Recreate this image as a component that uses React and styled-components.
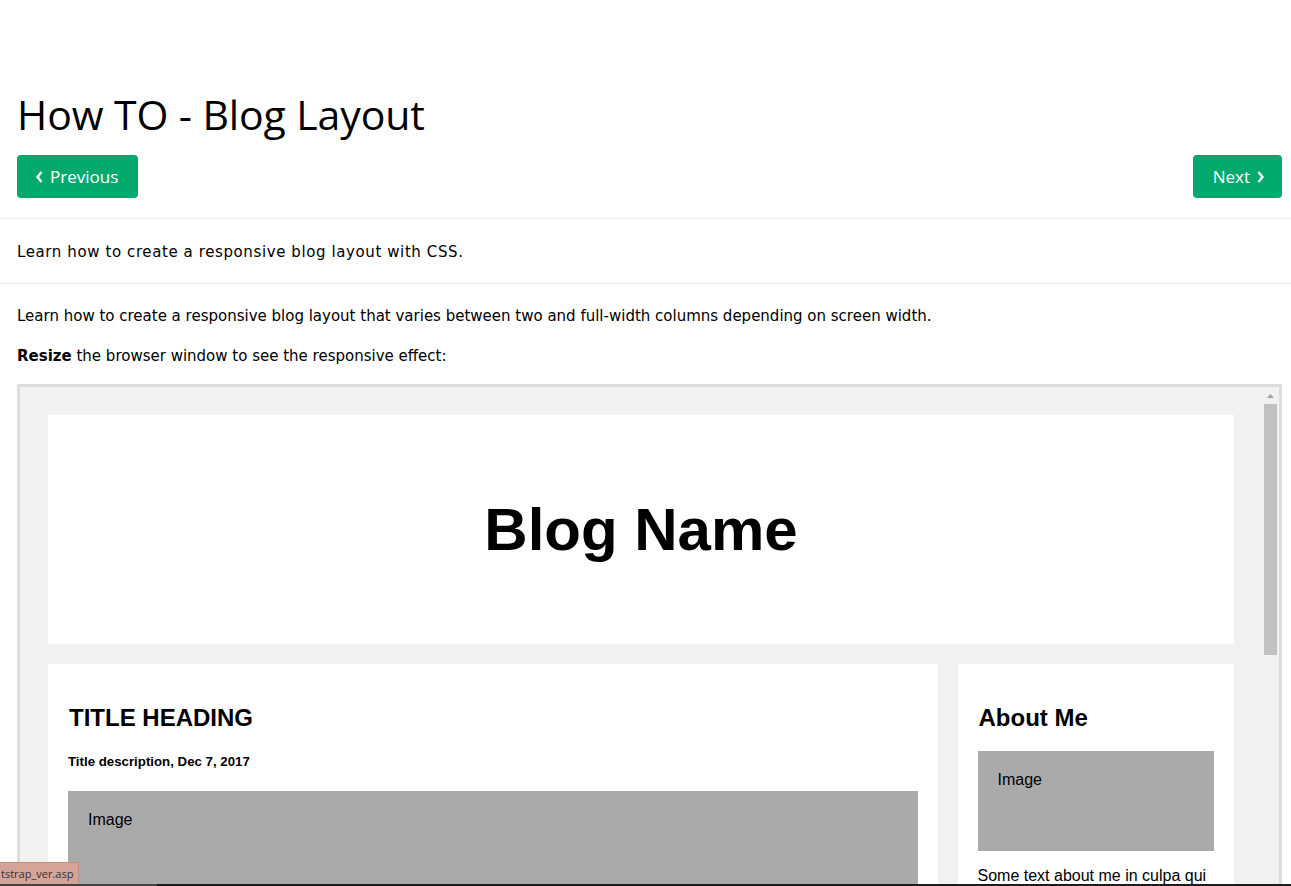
import React from "react";
import styled, { createGlobalStyle } from "styled-components";

const GlobalStyle = createGlobalStyle`
  html, body {
    margin: 0;
    padding: 0;
    background: #fff;
    overflow: hidden;
  }
`;

const Page = styled.div`
  position: relative;
  height: 886px;
  overflow: hidden;
  font-family: "DejaVu Sans", Verdana, sans-serif;
  color: #000;
`;

const Top = styled.div`
  padding: 90px 9px 0 17px;
`;

const Title = styled.h1`
  margin: 0;
  font-family: "Open Sans", "Noto Sans", sans-serif;
  font-size: 41px;
  font-weight: 400;
  line-height: 48px;
  letter-spacing: -0.1px;
`;

const NavRow = styled.div`
  display: flex;
  justify-content: space-between;
  margin-top: 17px;
  padding-bottom: 20px;
`;

const NavButton = styled.a`
  display: flex;
  align-items: center;
  gap: 7px;
  height: 43px;
  padding: 0 ${p => (p.$next ? "18px" : "20px")} 0 ${p => (p.$next ? "20px" : "19px")};
  box-sizing: border-box;
  background: #04aa6d;
  color: #fff;
  border-radius: 4px;
  font-family: "Open Sans", "Noto Sans", sans-serif;
  font-size: 17px;
  text-decoration: none;
`;

const Chevron = styled.svg`
  width: 7px;
  height: 12px;
  margin-top: 1px;
`;

const Rule = styled.hr`
  margin: 0;
  border: 0;
  border-top: 1px solid #eee;
`;

const Intro = styled.p`
  margin: 22px 17px 20px;
  font-size: 15px;
  line-height: 22px;
  letter-spacing: 0.6px;
`;

const Article = styled.div`
  padding: 21px 9px 0 17px;
`;

const Para = styled.p`
  margin: 0 0 18px;
  font-size: 15px;
  line-height: 22px;

  &:last-of-type {
    margin-bottom: 17px;
  }
`;

const Frame = styled.div`
  display: flex;
  height: 560px;
  border: 3px solid #dddddd;
  background: #f1f1f1;
  overflow: hidden;
`;

const FrameBody = styled.div`
  flex: 1;
  padding: 28px;
  font-family: "Liberation Sans", Arial, sans-serif;
  font-size: 16px;
`;

const Scrollbar = styled.div`
  width: 17px;
  display: flex;
  flex-direction: column;
  align-items: center;
  background: #f1f1f1;
`;

const ScrollArrow = styled.div`
  height: 17px;
  display: flex;
  align-items: center;
  justify-content: center;
`;

const Thumb = styled.div`
  width: 13px;
  height: 251px;
  background: #c1c1c1;
`;

const Header = styled.div`
  background: #fff;
  padding: 30px;
  text-align: center;

  h2 {
    margin: 49.8px 0;
    font-size: 60px;
    font-weight: 700;
  }
`;

const Row = styled.div`
  display: flex;
`;

const LeftColumn = styled.div`
  width: 75%;
`;

const RightColumn = styled.div`
  width: 25%;
  padding-left: 20px;
  box-sizing: border-box;
`;

const Card = styled.div`
  background: #fff;
  padding: 20px;
  margin-top: 20px;

  h2 {
    margin: 19.92px 0 19.92px 1px;
    font-size: 24px;
    font-weight: 700;
  }

  h5 {
    margin: 22.18px 0;
    font-size: 13.28px;
    font-weight: 700;
  }

  p {
    margin: 16px 0;
  }
`;

const FakeImg = styled.div`
  background: #aaa;
  width: 100%;
  height: ${p => p.$h}px;
  padding: 20px;
  box-sizing: border-box;
`;

const StatusBubble = styled.div`
  position: absolute;
  left: 0;
  bottom: 2px;
  height: 22px;
  padding: 0 5px 0 1px;
  display: flex;
  align-items: center;
  background: #d5a397;
  border: 1px solid #c08e82;
  border-left: 0;
  border-bottom: 0;
  border-top-right-radius: 3px;
  box-sizing: border-box;
  font-family: "Open Sans", "Noto Sans", sans-serif;
  font-size: 11px;
  color: #333;
`;

const BottomStrip = styled.div`
  position: absolute;
  left: 0;
  right: 0;
  bottom: 0;
  height: 2px;
  display: flex;
`;

const StripPart = styled.div`
  width: ${p => p.$w || "auto"};
  flex: ${p => (p.$w ? "none" : 1)};
  background: ${p => p.$c};
`;

export default function App() {
  return (
    <Page>
      <GlobalStyle />
      <Top>
        <Title>How TO - Blog Layout</Title>
        <NavRow>
          <NavButton href="#">
            <Chevron viewBox="0 0 7 12">
              <path d="M5.5 1 L1.5 6 L5.5 11" fill="none" stroke="#fff" strokeWidth="2.4" />
            </Chevron>
            Previous
          </NavButton>
          <NavButton href="#" $next>
            Next
            <Chevron viewBox="0 0 7 12">
              <path d="M1.5 1 L5.5 6 L1.5 11" fill="none" stroke="#fff" strokeWidth="2.4" />
            </Chevron>
          </NavButton>
        </NavRow>
      </Top>
      <Rule />
      <Intro>Learn how to create a responsive blog layout with CSS.</Intro>
      <Rule />
      <Article>
        <Para>
          Learn how to create a responsive blog layout that varies between two and full-width columns depending on screen width.
        </Para>
        <Para>
          <b>Resize</b> the browser window to see the responsive effect:
        </Para>
        <Frame>
          <FrameBody>
            <Header>
              <h2>Blog Name</h2>
            </Header>
            <Row>
              <LeftColumn>
                <Card>
                  <h2>TITLE HEADING</h2>
                  <h5>Title description, Dec 7, 2017</h5>
                  <FakeImg $h={200}>Image</FakeImg>
                  <p>Some text..</p>
                </Card>
              </LeftColumn>
              <RightColumn>
                <Card>
                  <h2>About Me</h2>
                  <FakeImg $h={100}>Image</FakeImg>
                  <p>Some text about me in culpa qui officia deserunt mollit anim..</p>
                </Card>
              </RightColumn>
            </Row>
          </FrameBody>
          <Scrollbar>
            <ScrollArrow>
              <svg width="7" height="4" viewBox="0 0 7 4">
                <path d="M0 4 L3.5 0 L7 4 Z" fill="#a3a3a3" />
              </svg>
            </ScrollArrow>
            <Thumb />
          </Scrollbar>
        </Frame>
      </Article>
      <StatusBubble>tstrap_ver.asp</StatusBubble>
      <BottomStrip>
        <StripPart $w="157px" $c="#444" />
        <StripPart $c="#1c1c1c" />
      </BottomStrip>
    </Page>
  );
}
